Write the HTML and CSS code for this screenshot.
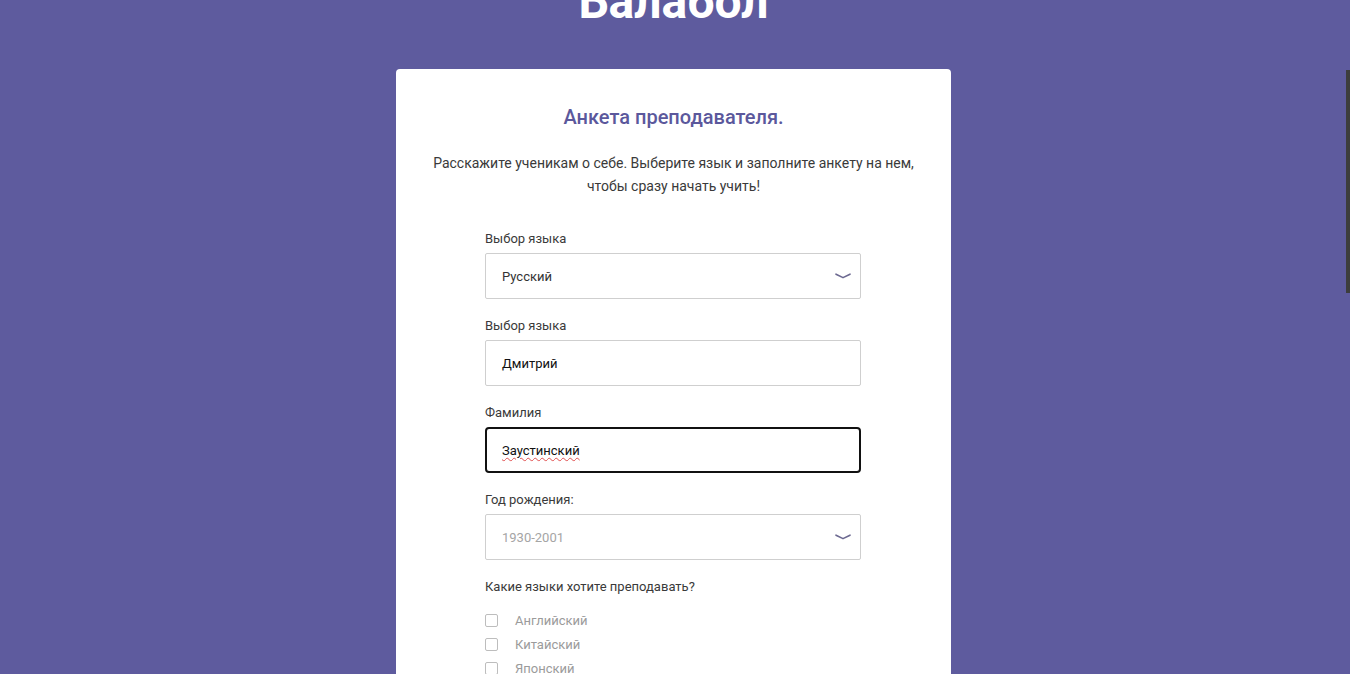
FILE: index.html
```html
<!DOCTYPE html>
<html lang="ru">
<head>
<meta charset="utf-8">
<title>Балабол</title>
<link rel="stylesheet" href="styles.css">
</head>
<body>
<div class="page">
  <h1 class="logo">Балабол</h1>
  <main class="card">
    <h2 class="card-title">Анкета преподавателя.</h2>
    <p class="card-intro">Расскажите ученикам о себе. Выберите язык и заполните анкету на нем,<br>чтобы сразу начать учить!</p>
    <form class="form">
      <div class="field">
        <label class="field-label">Выбор языка</label>
        <div class="control select">
          <span class="control-text">Русский</span>
          <svg class="chevron" width="16" height="6" viewBox="0 0 16 6"><path d="M1 1.2 L8 4.6 L15 1.2" fill="none" stroke="#6b6890" stroke-width="1.6" stroke-linecap="round" stroke-linejoin="round"/></svg>
        </div>
      </div>
      <div class="field">
        <label class="field-label">Выбор языка</label>
        <div class="control">
          <span class="control-text dark">Дмитрий</span>
        </div>
      </div>
      <div class="field">
        <label class="field-label">Фамилия</label>
        <div class="control focused">
          <span class="control-text dark spell">Заустинский</span>
        </div>
      </div>
      <div class="field">
        <label class="field-label">Год рождения:</label>
        <div class="control select">
          <span class="control-text muted">1930-2001</span>
          <svg class="chevron" width="16" height="6" viewBox="0 0 16 6"><path d="M1 1.2 L8 4.6 L15 1.2" fill="none" stroke="#6b6890" stroke-width="1.6" stroke-linecap="round" stroke-linejoin="round"/></svg>
        </div>
      </div>
      <div class="field">
        <span class="field-label">Какие языки хотите преподавать?</span>
        <ul class="checks">
          <li class="check"><span class="box"></span><span class="check-text">Английский</span></li>
          <li class="check"><span class="box"></span><span class="check-text">Китайский</span></li>
          <li class="check"><span class="box"></span><span class="check-text">Японский</span></li>
        </ul>
      </div>
    </form>
  </main>
</div>
<div class="scroll-thumb"></div>
</body>
</html>
```

FILE: styles.css
```css
html, body {
  margin: 0;
  padding: 0;
  height: 100%;
  overflow: hidden;
}
body {
  background: #5e5b9e;
  font-family: Roboto, "Noto Sans", Arial, sans-serif;
  color: #333;
}
.page {
  width: calc(100% - 3px);
  display: flex;
  flex-direction: column;
  align-items: center;
}
.logo {
  margin: -26px 0 0;
  font-size: 48px;
  line-height: 56px;
  font-weight: 700;
  color: #fff;
  height: 56px;
}
.card {
  margin-top: 39px;
  width: 555px;
  box-sizing: border-box;
  background: #fff;
  border-radius: 4px;
  padding: 36px 0 40px;
  display: flex;
  flex-direction: column;
  align-items: center;
}
.card-title {
  margin: 0;
  font-size: 20px;
  line-height: 24px;
  font-weight: 500;
  color: #5b589c;
}
.card-intro {
  margin: 23px 0 0;
  font-size: 14px;
  line-height: 23px;
  text-align: center;
  color: #3a3a3a;
}
.form {
  margin-top: 33px;
  margin-right: 1px;
  width: 376px;
  display: flex;
  flex-direction: column;
  gap: 19px;
}
.field {
  display: flex;
  flex-direction: column;
}
.field-label {
  font-size: 13px;
  line-height: 16px;
  color: #3a3a3a;
  margin-bottom: 6px;
}
.control {
  height: 46px;
  box-sizing: border-box;
  border: 1px solid #cfcfcf;
  border-radius: 2px;
  display: flex;
  align-items: center;
  padding: 0 9px 0 16px;
}
.control.focused {
  border: 2px solid #111;
  border-radius: 4px;
  padding-left: 15px;
}
.control-text {
  flex: 1;
  font-size: 13px;
  color: #333;
}
.control-text.dark {
  color: #111;
}
.control-text.muted {
  color: #a5a5a5;
}
.spell {
  flex: none;
  text-decoration: underline wavy #e05050;
  text-underline-offset: 2px;
  text-decoration-thickness: 1px;
}
.chevron {
  display: block;
}
.checks {
  list-style: none;
  margin: 7px 0 0;
  padding: 0;
}
.check {
  display: flex;
  align-items: center;
  height: 24px;
}
.box {
  width: 13px;
  height: 13px;
  box-sizing: border-box;
  border: 1px solid #bdbdbd;
  border-radius: 2px;
  margin-right: 17px;
}
.check-text {
  font-size: 13px;
  color: #9b9b9b;
}
.scroll-thumb {
  position: fixed;
  right: 0;
  top: 70px;
  width: 4px;
  height: 223px;
  background: #3d3d3d;
}
```
